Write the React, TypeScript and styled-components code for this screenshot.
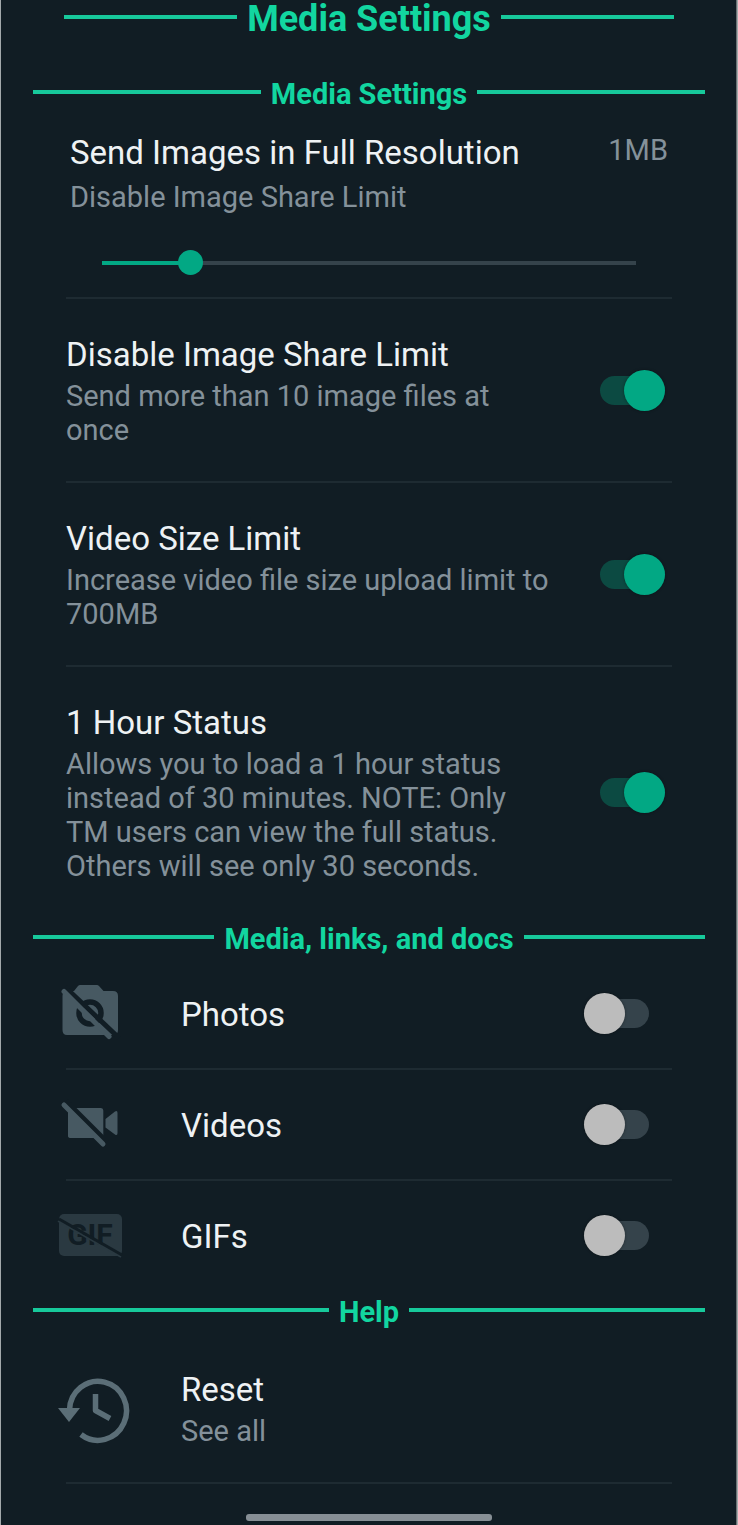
import React from "react";
import styled, { createGlobalStyle } from "styled-components";

const color = {
  bg: "#111d24",
  accent: "#12d6a0",
  line: "#17c99b",
  green: "#02a884",
  greenTrack: "#0c4a42",
  text: "#eef2f4",
  muted: "#84919a",
  rule: "#1e2b32",
  track: "#35434b",
  thumb: "#bcbcbc",
  icon: "#475962",
  edge: "#a3a9ab",
  edgeInner: "#6b7275",
};

const GlobalStyle = createGlobalStyle`
  *, *::before, *::after { box-sizing: border-box; }
  body {
    margin: 0;
    background: ${color.bg};
    color: ${color.text};
    font-family: Roboto, "Liberation Sans", sans-serif;
  }
`;

const Page = styled.main`
  min-height: 100vh;
  display: flex;
  flex-direction: column;
  border-left: 1px solid ${color.edge};
  border-right: 1px solid ${color.edge};
  box-shadow: inset -1px 0 ${color.edgeInner};
  background: ${color.bg};
`;

const Heading = styled.h2<{ $page?: boolean }>`
  margin: 0;
  padding: 2px ${(p) => (p.$page ? 63 : 32)}px 0;
  display: flex;
  align-items: center;
  gap: 10px;
  height: ${(p) => (p.$page ? 36 : 42)}px;
  color: ${color.accent};
  font-size: ${(p) => (p.$page ? 36 : 29)}px;
  line-height: 38px;
  font-weight: 700;
  white-space: nowrap;

  &::before,
  &::after {
    content: "";
    flex: 1;
    height: 4px;
    margin-bottom: 4px;
    background: ${color.line};
  }
`;

const Section = styled.section<{ $gap?: boolean }>`
  padding-top: ${(p) => (p.$gap ? 36 : 0)}px;
`;

const Rule = styled.hr`
  margin: 0 65px;
  border: 0;
  height: 2px;
  background: ${color.rule};
`;

const SliderBlock = styled.div`
  padding: 19px 69px 22px;
`;

const SliderHead = styled.div`
  display: flex;
  align-items: flex-start;
  justify-content: space-between;
`;

const Title = styled.span`
  display: block;
  font-size: 33px;
  line-height: 40px;
`;

const Note = styled.span`
  display: block;
  color: ${color.muted};
  font-size: 29px;
  line-height: 34px;
`;

const TextStack = styled.label<{ $gap: number }>`
  display: flex;
  flex-direction: column;
  gap: ${(p) => p.$gap}px;
  max-width: 485px;
`;

const Range = styled.input`
  appearance: none;
  display: block;
  width: calc(100% - 64px);
  height: 24px;
  margin: 37px 32px 0;
  background: transparent;

  &::-webkit-slider-runnable-track {
    height: 4px;
    background: linear-gradient(to right, ${color.green} 17%, ${color.track} 17%);
  }
  &::-webkit-slider-thumb {
    appearance: none;
    width: 25px;
    height: 25px;
    margin-top: -11px;
    border-radius: 50%;
    background: ${color.green};
  }
`;

const SettingRow = styled.div`
  display: flex;
  align-items: center;
  justify-content: space-between;
  padding: 34px 72px 34px 65px;

  ${TextStack} {
    padding-top: 2px;
  }
`;

const MediaRow = styled.div`
  display: flex;
  align-items: center;
  min-height: 109px;
  padding: 0 88px 0 56px;
`;

const IconCell = styled.span`
  display: flex;
  width: 124px;
`;

const MediaText = styled.label`
  flex: 1;
  padding-top: 3px;
`;

const ResetRow = styled.a`
  display: flex;
  align-items: center;
  min-height: 150px;
  padding: 4px 88px 0 56px;
  color: inherit;
  text-decoration: none;
`;

const Switch = styled.input`
  appearance: none;
  display: flex;
  align-items: center;
  flex: none;
  width: 65px;
  height: 41px;
  margin: 0;
  position: relative;
  cursor: pointer;

  &::before {
    content: "";
    width: 65px;
    height: 29px;
    border-radius: 15px;
    background: ${color.track};
  }
  &::after {
    content: "";
    position: absolute;
    left: 0;
    top: 0;
    width: 41px;
    height: 41px;
    border-radius: 50%;
    background: ${color.thumb};
    box-shadow: 0 0 3px rgba(0, 0, 0, 0.4);
  }
  &:checked::before {
    background: ${color.greenTrack};
  }
  &:checked::after {
    left: 24px;
    background: ${color.green};
  }
`;

const HomeBar = styled.div`
  width: 246px;
  height: 7px;
  margin: auto auto 4px;
  border-radius: 3px;
  background: #878f95;
`;

const PhotoOff = () => (
  <svg width="66" height="60" viewBox="0 0 66 60" aria-hidden="true">
    <path
      d="M17 7 L21 2 Q22 1 23 1 H40 Q41 1 42 2 L46.500 7 H56 Q61 7 61 12 V46 Q61 51 56 51 H10 Q5.500 51 5.500 46 V12 Q5.500 7 10 7 Z"
      fill={color.icon}
    />
    <circle cx="33" cy="29" r="11" fill="none" stroke={color.bg} strokeWidth="5.500" />
    <path d="M8 3 L62 54" stroke={color.bg} strokeWidth="5" />
    <path d="M7 7.500 L52 52.500" stroke={color.icon} strokeWidth="5" strokeLinecap="round" />
  </svg>
);

const VideoOff = () => (
  <svg width="66" height="60" viewBox="0 0 66 60" aria-hidden="true">
    <path
      d="M13 13 H44 Q46.300 13 46.300 15.500 V41 Q46.300 43 43 43 H14 Q11 43 11 41 V15 Q11 13 13 13 Z M48.500 24 L58 16.500 Q60.500 15 60.500 18 V38 Q60.500 41 58 39.500 L48.500 32.500 Z"
      fill={color.icon}
    />
    <path d="M9 6 L50 47" stroke={color.bg} strokeWidth="5" />
    <path d="M7 10 L46 49" stroke={color.icon} strokeWidth="5" strokeLinecap="round" />
  </svg>
);

const GifOff = () => (
  <svg width="66" height="44" viewBox="0 1 66 44" aria-hidden="true">
    <rect x="2" y="1" width="63" height="42" rx="5" fill="#2a3941" />
    <text
      x="33"
      y="32"
      textAnchor="middle"
      fontFamily="Roboto, sans-serif"
      fontSize="30"
      fontWeight="700"
      fill={color.bg}
    >
      GIF
    </text>
    <path d="M1 8 L64 44" stroke="#2a3941" strokeWidth="2" />
    <path d="M2 6 L65 42" stroke={color.bg} strokeWidth="3" />
  </svg>
);

const ResetIcon = () => (
  <svg width="74" height="72" viewBox="0 -3 74 72" aria-hidden="true">
    <g fill="none" stroke="#5b6e77" strokeWidth="5.500">
      <path d="M12.500 34 A28.500 29.500 0 1 1 24 58.500" />
      <path d="M38.500 18 V34.500 L53 42.500" strokeLinejoin="round" />
    </g>
    <path d="M1 32 H23 L12 46 Z" fill="#5b6e77" />
  </svg>
);

const limits = [
  {
    id: "share-limit",
    title: "Disable Image Share Limit",
    note: "Send more than 10 image files at once",
  },
  {
    id: "video-size",
    title: "Video Size Limit",
    note: "Increase video file size upload limit to 700MB",
  },
  {
    id: "hour-status",
    title: "1 Hour Status",
    note: "Allows you to load a 1 hour status instead of 30 minutes. NOTE: Only TM users can view the full status. Others will see only 30 seconds.",
  },
];

const media = [
  { id: "photos", title: "Photos", Icon: PhotoOff },
  { id: "videos", title: "Videos", Icon: VideoOff },
  { id: "gifs", title: "GIFs", Icon: GifOff },
];

export default function App() {
  return (
    <>
      <GlobalStyle />
      <Page>
        <Heading as="h1" $page>
          Media Settings
        </Heading>
        <Section $gap>
          <Heading>Media Settings</Heading>
          <SliderBlock>
            <SliderHead>
              <TextStack htmlFor="resolution" $gap={7}>
                <Title>Send Images in Full Resolution</Title>
                <Note>Disable Image Share Limit</Note>
              </TextStack>
              <Note as="output" htmlFor="resolution">
                1MB
              </Note>
            </SliderHead>
            <Range id="resolution" type="range" min={0} max={100} defaultValue={15} />
          </SliderBlock>
          {limits.map((item) => (
            <React.Fragment key={item.id}>
              <Rule />
              <SettingRow>
                <TextStack htmlFor={item.id} $gap={4}>
                  <Title>{item.title}</Title>
                  <Note>{item.note}</Note>
                </TextStack>
                <Switch id={item.id} type="checkbox" role="switch" defaultChecked />
              </SettingRow>
            </React.Fragment>
          ))}
        </Section>
        <Section>
          <Heading>Media, links, and docs</Heading>
          {media.map(({ id, title, Icon }, i) => (
            <React.Fragment key={id}>
              {i > 0 && <Rule />}
              <MediaRow>
                <IconCell>
                  <Icon />
                </IconCell>
                <MediaText htmlFor={id}>
                  <Title>{title}</Title>
                </MediaText>
                <Switch id={id} type="checkbox" role="switch" />
              </MediaRow>
            </React.Fragment>
          ))}
        </Section>
        <Section>
          <Heading>Help</Heading>
          <ResetRow href="#reset">
            <IconCell>
              <ResetIcon />
            </IconCell>
            <TextStack as="span" $gap={4}>
              <Title>Reset</Title>
              <Note>See all</Note>
            </TextStack>
          </ResetRow>
          <Rule />
        </Section>
        <HomeBar />
      </Page>
    </>
  );
}
